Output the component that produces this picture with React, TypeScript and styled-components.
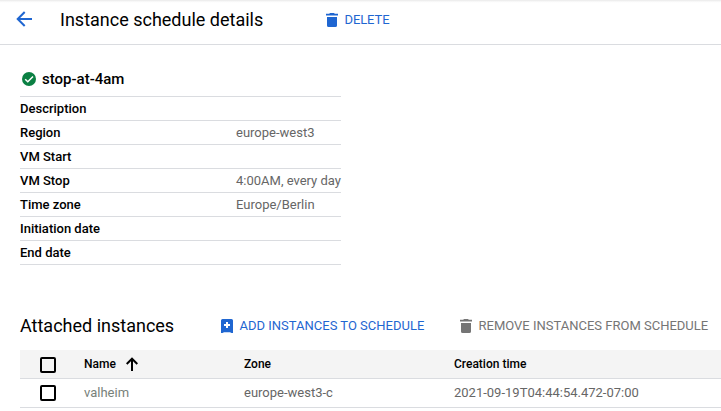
import React from "react";
import styled, { createGlobalStyle } from "styled-components";

const GlobalStyle = createGlobalStyle`
  * { box-sizing: border-box; }
  body {
    margin: 0;
    background: #fff;
    color: #000;
    font-family: Roboto, "Liberation Sans", sans-serif;
    font-size: 13px;
    overflow: hidden;
  }
  svg { display: block; flex: none; }
`;

const Page = styled.div`
  width: 721px;
  height: 411px;
  overflow: hidden;
`;

const Header = styled.header`
  height: 45px;
  display: flex;
  align-items: flex-start;
  border-bottom: 1px solid #dadce0;
  background: linear-gradient(#e9e9e9 0, #f3f3f3 1px, #fcfcfc 2px, #fff 3px);
  padding: 10px 0 0 15px;
`;

const Title = styled.h1`
  margin: -2px 0 0 27px;
  width: 266px;
  font-size: 18px;
  font-weight: 400;
  line-height: 24px;
`;

const Action = styled.button<{ $muted?: boolean; $spacing?: string }>`
  display: flex;
  align-items: center;
  gap: 6.5px;
  height: 20px;
  padding: 0;
  border: 0;
  background: none;
  color: ${(p) => (p.$muted ? "#757575" : "#1f66d1")};
  font: 450 13px/20px Roboto, sans-serif;
  letter-spacing: ${(p) => p.$spacing ?? "0"};
  white-space: nowrap;
`;

const Content = styled.main`
  padding: 24px 0 0 20px;
`;

const ScheduleName = styled.h2`
  display: flex;
  align-items: center;
  gap: 6px;
  height: 20px;
  margin: 0 0 7px;
  padding-left: 2px;
  font-size: 15px;
  font-weight: 500;
`;

const Details = styled.dl`
  width: 321px;
  margin: 0;
  border-top: 1px solid #dadce0;
`;

const Detail = styled.div`
  display: grid;
  grid-template-columns: 216px 1fr;
  height: 24px;
  border-bottom: 1px solid #dadce0;
  line-height: 23px;
  white-space: nowrap;
`;

const Term = styled.dt`
  font-weight: 500;
`;

const Value = styled.dd`
  margin: 0;
  color: #666;
`;

const Toolbar = styled.div`
  display: flex;
  align-items: center;
  height: 24px;
  margin: 49px 0 12px;
`;

const SectionTitle = styled.h2`
  width: 201px;
  margin: 0;
  font-size: 18px;
  font-weight: 400;
  line-height: 24px;
`;

const AddSlot = styled.div`
  width: 239px;
`;

const Row = styled.div<{ $head?: boolean }>`
  display: grid;
  grid-template-columns: 64px 160px 210px 1fr;
  align-items: start;
  height: 29px;
  border-bottom: 1px solid #dadce0;
  background: ${(p) => (p.$head ? "#f4f4f4" : "#fff")};
  color: ${(p) => (p.$head ? "#000" : "#666")};
  font-weight: ${(p) => (p.$head ? 500 : 400)};
  font-size: ${(p) => (p.$head ? "12px" : "13px")};
  --cell-height: ${(p) => (p.$head ? "28px" : "26px")};
`;

const Cell = styled.div`
  display: flex;
  align-items: center;
  height: var(--cell-height);
  white-space: nowrap;
`;

const NameCell = styled(Cell)<{ $link?: boolean }>`
  gap: 10px;
  color: ${(p) => (p.$link ? "#78817a" : "inherit")};
`;

const Checkbox = styled.span`
  width: 16px;
  height: 16px;
  margin: 2px 0 0 20px;
  border: 2px solid #000;
  border-radius: 2px;
`;

const TrashIcon = () => (
  <svg width="12" height="14" viewBox="0 0 12 14" fill="currentColor">
    <path d="M4 0h4l.8.8H12v1.8H0V.8h3.2zM1 4h10v8.4A1.6 1.6 0 0 1 9.4 14H2.6A1.6 1.6 0 0 1 1 12.4z" />
  </svg>
);

const AddBookmarkIcon = () => (
  <svg width="12" height="14" viewBox="0 0 12 14">
    <path fill="currentColor" d="M1.5 0h9A1.5 1.5 0 0 1 12 1.5V14h-1.5L9 13.2H3L1.5 14H0V1.5A1.5 1.5 0 0 1 1.5 0z" />
    <path d="M6 3v6M3 6h6" stroke="#fff" strokeWidth="2" />
  </svg>
);

const BackIcon = () => (
  <svg width="18" height="18" viewBox="0 0 18 18" fill="none" stroke="#1f66d1" strokeWidth="2">
    <path d="M17 9H3M9.7 2L2.7 9l7 7" />
  </svg>
);

const UpIcon = () => (
  <svg width="12" height="14" viewBox="0 0 12 14" fill="none" stroke="#000" strokeWidth="2">
    <path d="M6 14V2M.7 7L6 1.7 11.3 7" />
  </svg>
);

const CheckIcon = () => (
  <svg width="14" height="14" viewBox="0 0 14 14">
    <circle cx="7" cy="7" r="7" fill="#0b8043" />
    <path d="M3.2 7.2l2.6 2.6 5.2-5.3" fill="none" stroke="#fff" strokeWidth="1.5" />
  </svg>
);

const details = [
  ["Description", ""],
  ["Region", "europe-west3"],
  ["VM Start", ""],
  ["VM Stop", "4:00AM, every day"],
  ["Time zone", "Europe/Berlin"],
  ["Initiation date", ""],
  ["End date", ""],
];

export default function App() {
  return (
    <Page>
      <GlobalStyle />
      <Header>
        <BackIcon />
        <Title>Instance schedule details</Title>
        <Action $spacing="-0.1px">
          <TrashIcon />
          DELETE
        </Action>
      </Header>
      <Content>
        <ScheduleName>
          <CheckIcon />
          stop-at-4am
        </ScheduleName>
        <Details>
          {details.map(([term, value]) => (
            <Detail key={term}>
              <Term>{term}</Term>
              <Value>{value}</Value>
            </Detail>
          ))}
        </Details>
        <Toolbar>
          <SectionTitle>Attached instances</SectionTitle>
          <AddSlot>
            <Action>
              <AddBookmarkIcon />
              ADD INSTANCES TO SCHEDULE
            </Action>
          </AddSlot>
          <Action $muted>
            <TrashIcon />
            REMOVE INSTANCES FROM SCHEDULE
          </Action>
        </Toolbar>
        <Row $head>
          <Cell><Checkbox /></Cell>
          <NameCell>Name <UpIcon /></NameCell>
          <Cell>Zone</Cell>
          <Cell>Creation time</Cell>
        </Row>
        <Row>
          <Cell><Checkbox /></Cell>
          <NameCell $link>valheim</NameCell>
          <Cell>europe-west3-c</Cell>
          <Cell>2021-09-19T04:44:54.472-07:00</Cell>
        </Row>
      </Content>
    </Page>
  );
}
